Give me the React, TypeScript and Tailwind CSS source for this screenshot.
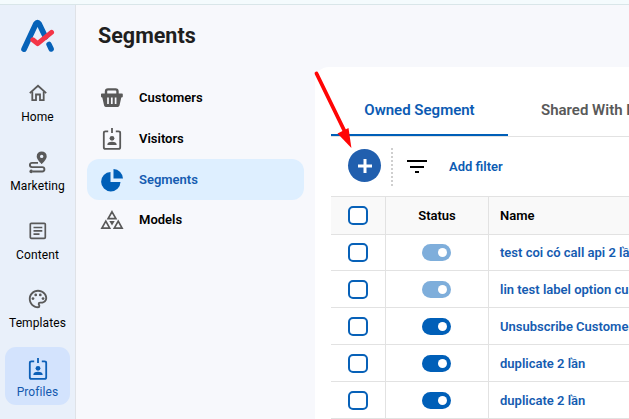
import React from "react";

type IconProps = { className?: string };

function Logo() {
  return (
    <svg className="mx-auto block h-[34px] w-[35px]" viewBox="0 0 35 34" fill="none" strokeLinecap="round">
      <path d="M4 30.2 L15.9 4.8 Q17.5 2.2 19.1 4.8 L25.5 18" stroke="#0662b8" strokeWidth="5.6" strokeLinejoin="round" />
      <path d="M29 25.4 L31.2 30" stroke="#0662b8" strokeWidth="5.4" />
      <path d="M12.8 20.8 L17.6 24.6 L31.5 13.4" stroke="#f43547" strokeWidth="5" strokeLinejoin="round" />
    </svg>
  );
}

function HomeIcon({ className }: IconProps) {
  return (
    <svg className={className} viewBox="0 0 20 20" fill="none" stroke="currentColor" strokeWidth="1.8">
      <path d="M1.8 10.2 L10 2.8 L18.2 10.2" />
      <path d="M4.3 8.5 V17.2 H8 V11.5 H12 V17.2 H15.7 V8.5" />
    </svg>
  );
}

function RouteIcon({ className }: IconProps) {
  return (
    <svg className={className} viewBox="0 0 20 24" fill="none" stroke="currentColor">
      <path
        d="M13.7 1.4 A5 5 0 0 0 8.7 6.4 C8.7 9.5 13.7 14 13.7 14 S18.7 9.5 18.7 6.4 A5 5 0 0 0 13.7 1.4 Z M13.7 4.7 A1.7 1.7 0 1 1 13.7 8.1 A1.7 1.7 0 1 1 13.7 4.7 Z"
        fill="currentColor"
        fillRule="evenodd"
        stroke="none"
      />
      <path d="M10 12.9 H4 A2.1 2.1 0 0 0 4 17.1 H14.2 A2.2 2.2 0 0 1 14.2 21.5 H5" strokeWidth="1.9" />
      <circle cx="3.2" cy="21.4" r="1.8" fill="currentColor" stroke="none" />
    </svg>
  );
}

function ArticleIcon({ className }: IconProps) {
  return (
    <svg className={className} viewBox="0 0 20 20" fill="none" stroke="currentColor" strokeWidth="1.7">
      <rect x="2.3" y="2.3" width="15" height="15" rx="1" />
      <path d="M5.5 6.5 H14.3 M5.5 9.8 H14.3 M5.5 13.1 H11.5" />
    </svg>
  );
}

function PaletteIcon({ className }: IconProps) {
  return (
    <svg className={className} viewBox="0 0 24 24" fill="currentColor">
      <path d="M12 22C6.49 22 2 17.51 2 12S6.49 2 12 2s10 4.04 10 9c0 3.31-2.69 6-6 6h-1.77c-.28 0-.5.22-.5.5 0 .12.05.23.13.33.41.47.64 1.06.64 1.67A2.5 2.5 0 0 1 12 22zm0-18c-4.41 0-8 3.59-8 8s3.59 8 8 8c.28 0 .5-.22.5-.5a.54.54 0 0 0-.14-.35c-.41-.46-.63-1.05-.63-1.65a2.5 2.5 0 0 1 2.5-2.5H16c2.21 0 4-1.79 4-4 0-3.86-3.59-7-8-7z" />
      <circle cx="6.5" cy="11.5" r="1.5" />
      <circle cx="9.5" cy="7.5" r="1.5" />
      <circle cx="14.5" cy="7.5" r="1.5" />
      <circle cx="17.5" cy="11.5" r="1.5" />
    </svg>
  );
}

function BadgeIcon({ className }: IconProps) {
  return (
    <svg className={className} viewBox="0 0 20 24" fill="none" stroke="currentColor" strokeWidth="1.8">
      <path d="M6.2 4.3 H3.5 Q1.8 4.3 1.8 6 V20.2 Q1.8 21.9 3.5 21.9 H16.5 Q18.2 21.9 18.2 20.2 V6 Q18.2 4.3 16.5 4.3 H13.8 M10 1 V6" />
      <circle cx="10" cy="11.3" r="2.4" fill="currentColor" stroke="none" />
      <path d="M5.4 18 V17 Q6.2 14.8 10 14.8 T14.6 17 V18 Z" fill="currentColor" stroke="none" />
    </svg>
  );
}

function BasketIcon({ className }: IconProps) {
  return (
    <svg className={className} viewBox="0 0 24 22">
      <path d="M6 8 V4.5 Q6 2.4 8 2.4 H15.5 Q17.5 2.4 17.5 4.5 V8" fill="none" stroke="currentColor" strokeWidth="2.4" />
      <path d="M1.8 6.5 H22 Q22.8 6.5 22.8 7.3 V9.5 Q22.8 10.5 21.3 10.5 L19.5 18.6 Q19.1 20 17.8 20 H5.7 Q4.4 20 4.1 18.6 L2.3 10.5 Q1 10.5 1 9.5 V7.3 Q1 6.5 1.8 6.5 Z" fill="currentColor" />
      <path d="M8 10.5 V17 M11.8 10.5 V17 M15.6 10.5 V17" stroke="#f7f8fc" strokeWidth="1.7" />
    </svg>
  );
}

function PieIcon({ className }: IconProps) {
  return (
    <svg className={className} viewBox="0 0 24 24" fill="currentColor">
      <path d="M10.5 4 V14 H20.5 A9.7 9.7 0 1 1 10.5 4 Z" />
      <path d="M13.5 1 A9.8 9.8 0 0 1 23 10.6 H13.5 Z" />
    </svg>
  );
}

function ModelsIcon({ className }: IconProps) {
  return (
    <svg className={className} viewBox="0 0 24 20" fill="none" stroke="currentColor" strokeWidth="1.7">
      <path d="M12 1.8 L15.9 8.6 H8.1 Z M5.8 11.2 L9.7 18.2 H1.9 Z M18.2 11.2 L22.1 18.2 H14.3 Z" />
      <path d="M9.3 11 H14.7 L12 15.5 Z" fill="currentColor" stroke="none" />
    </svg>
  );
}

const mainNav = [
  { label: "Home", Icon: HomeIcon, size: "h-5 w-5", height: "h-[69px]" },
  { label: "Marketing", Icon: RouteIcon, size: "h-6 w-5", height: "h-[69px]" },
  { label: "Content", Icon: ArticleIcon, size: "h-5 w-5", height: "h-[68px]" },
  { label: "Templates", Icon: PaletteIcon, size: "h-[22px] w-[22px]", height: "h-[68px]" },
  { label: "Profiles", Icon: BadgeIcon, size: "h-6 w-5", height: "h-[58px]", active: true },
];

const subNav = [
  { label: "Customers", Icon: BasketIcon, size: "h-[22px] w-6", height: "h-[41px]" },
  { label: "Visitors", Icon: BadgeIcon, size: "h-6 w-5", height: "h-[41px]" },
  { label: "Segments", Icon: PieIcon, size: "h-6 w-6", height: "h-[41px]", active: true },
  { label: "Models", Icon: ModelsIcon, size: "h-5 w-6", height: "h-[39px]" },
];

const rows = [
  { name: "test coi có call api 2 lần", height: "h-9", dim: true },
  { name: "lin test label option custom", height: "h-[37px]", dim: true },
  { name: "Unsubscribe Customers", height: "h-[37px]" },
  { name: "duplicate 2 lần", height: "h-[37px]" },
  { name: "duplicate 2 lần", height: "h-[37px]" },
];

function Checkbox() {
  return <span className="block h-[19px] w-5 shrink-0 rounded-[5px] border-2 border-[#0761b8] bg-white" />;
}

function Toggle({ dim }: { dim?: boolean }) {
  return (
    <span className={`flex h-[17px] w-[29px] items-center justify-end rounded-full bg-[#005fb8] pr-1 ${dim ? "opacity-50" : ""}`}>
      <span className="h-[9px] w-[9px] rounded-full bg-white" />
    </span>
  );
}

export default function App() {
  return (
    <div className="relative flex h-[419px] w-[629px] flex-col overflow-hidden bg-[#f7f8fc] font-['Roboto','Liberation_Sans',sans-serif] text-black">
      <header className="h-[5px] shrink-0 border-b border-[#d9e6e9] bg-[#f4fbfd]" />
      <div className="flex min-h-0 flex-1">
        <aside className="w-[76px] shrink-0 border-r border-[#dfe2e7] bg-[#e9f0fa] pt-[14px]">
          <Logo />
          <nav className="mt-5 flex flex-col px-[5px]">
            {mainNav.map(({ label, Icon, size, height, active }) => (
              <a key={label} className={`flex w-[65px] shrink-0 flex-col items-center rounded-[11px] ${height} ${active ? "bg-[#d3e3fd] text-[#1459ae]" : ""}`}>
                <span className={`flex h-6 items-center ${active ? "mt-2.5 text-[#0c5fb7]" : "mt-2 text-[#595959]"}`}>
                  <Icon className={size} />
                </span>
                <span className={`text-xs leading-4 tracking-[0.1px] ${active ? "mt-[3px]" : "mt-1"}`}>{label}</span>
              </a>
            ))}
          </nav>
        </aside>

        <section className="w-[239px] shrink-0">
          <h1 className="ml-[22px] mt-[17px] text-[21.5px] font-bold leading-7 text-[#1f1f1f]">Segments</h1>
          <nav className="ml-[11px] mt-[27px] w-[217px]">
            {subNav.map(({ label, Icon, size, height, active }) => (
              <a key={label} className={`flex items-center rounded-xl pl-[13px] text-[13px] font-medium ${height} ${active ? "bg-[#deefff] text-[#155cb1]" : ""}`}>
                <span className={`flex w-6 justify-center ${active ? "text-[#005fb8]" : "text-[#595959]"}`}>
                  <Icon className={size} />
                </span>
                <span className="ml-[15px] font-semibold">{label}</span>
              </a>
            ))}
          </nav>
        </section>

        <main className="mt-[62px] min-w-0 flex-1 overflow-hidden rounded-tl-[14px] bg-white pl-4">
          <div className="flex h-[70px] border-b border-[#e2e2e2] pt-4 text-[15px] font-semibold">
            <div className="flex h-[53px] w-[177px] shrink-0 items-center justify-center border-b-2 border-[#005fb8] pt-[3px] text-[#0c5bb3]">
              Owned Segment
            </div>
            <div className="flex h-[54px] items-center whitespace-nowrap pl-[33px] text-[#595959]">Shared With Me</div>
          </div>

          <div className="flex h-[59px] items-center pl-4">
            <button className="mb-0.5 ml-px flex h-[33px] w-[33px] shrink-0 items-center justify-center rounded-full bg-[#215fae]">
              <svg className="h-[14px] w-[14px]" viewBox="0 0 14 14" stroke="white" strokeWidth="3">
                <path d="M7 0 V14 M0 7 H14" />
              </svg>
            </button>
            <svg className="ml-2.5 h-[38px] w-0.5" viewBox="0 0 2 38">
              <path d="M1 0 V38" stroke="#cfcfcf" strokeWidth="2" strokeDasharray="2 2" />
            </svg>
            <svg className="mb-px ml-3.5 h-[14px] w-5" viewBox="0 0 20 14" stroke="black" strokeWidth="2">
              <path d="M0 2 H20 M3 8 H17 M8 13 H12" />
            </svg>
            <span className="ml-[22px] text-[13px] font-semibold text-[#0c5bb3]">Add filter</span>
          </div>

          <div className="w-[420px] border-t border-[#e2e2e2] text-[13px] font-semibold">
            <div className="flex h-[38px] border-b border-[#e2e2e2] bg-[#f9f9f9]">
              <div className="flex w-[55px] shrink-0 items-center border-r border-[#e2e2e2] pl-[17px]"><Checkbox /></div>
              <div className="flex w-[103px] shrink-0 items-center justify-center border-r border-[#e2e2e2]">Status</div>
              <div className="flex items-center pl-[11px]">Name</div>
            </div>
            {rows.map(({ name, height, dim }, i) => (
              <div key={i} className={`flex border-b border-[#e2e2e2] ${height}`}>
                <div className="flex w-[55px] shrink-0 items-center border-r border-[#e2e2e2] pl-[17px]"><Checkbox /></div>
                <div className="flex w-[103px] shrink-0 items-center justify-center border-r border-[#e2e2e2] pr-px"><Toggle dim={dim} /></div>
                <div className="flex items-center whitespace-nowrap pl-[11px] pt-px text-[#155cb1]">{name}</div>
              </div>
            ))}
          </div>
        </main>
      </div>

      <svg className="pointer-events-none absolute left-[310px] top-[66px] h-[86px] w-[48px]" viewBox="0 0 48 86">
        <path d="M6.5 7.5 L35 66" stroke="#ff0505" strokeWidth="3.8" strokeLinecap="round" />
        <path d="M27.5 67.5 L38.5 62 L41.4 82 Z" fill="#ff0505" />
      </svg>
    </div>
  );
}
